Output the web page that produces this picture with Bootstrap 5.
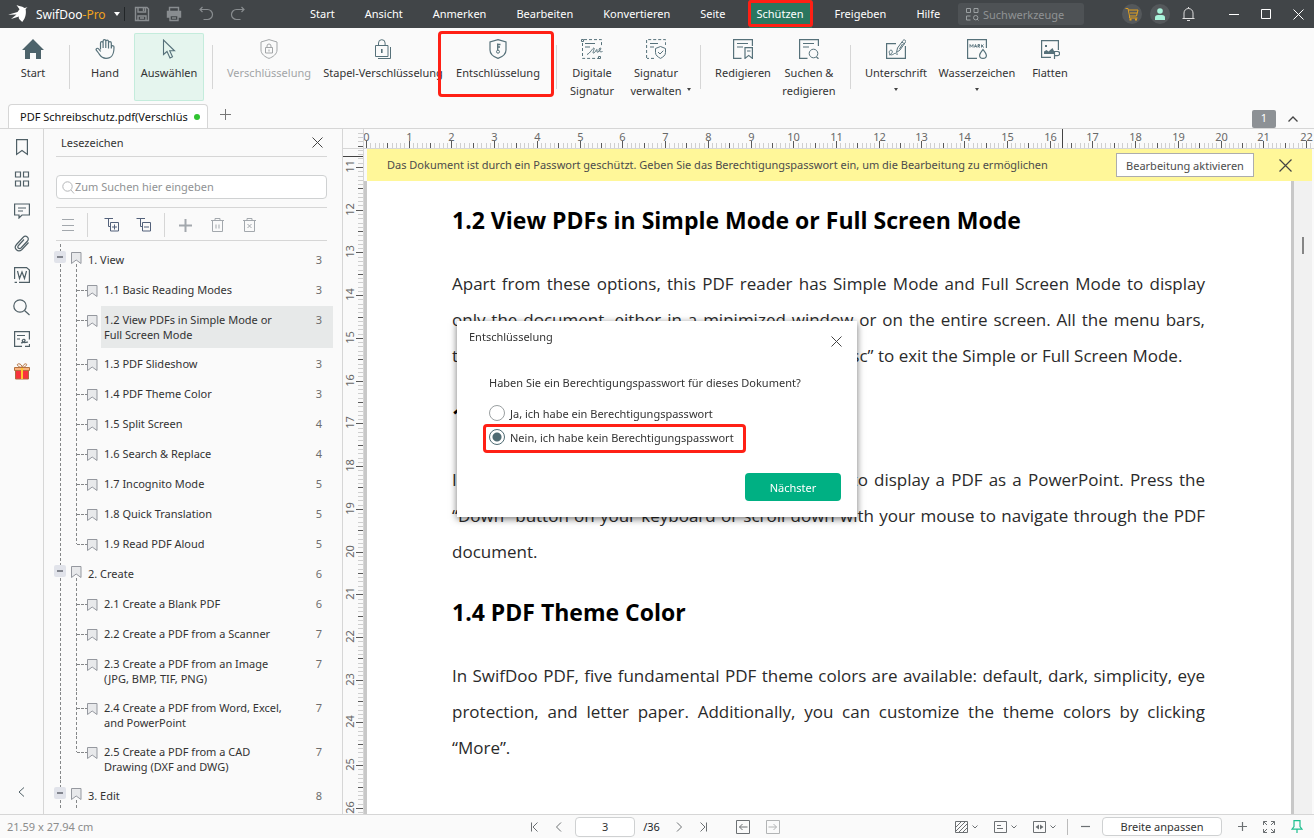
<!DOCTYPE html>
<html lang="de">
<head>
<meta charset="utf-8">
<meta name="viewport" content="width=device-width, initial-scale=1">
<title>SwifDoo-Pro</title>
<link href="https://cdn.jsdelivr.net/npm/bootstrap@5.3.0/dist/css/bootstrap.min.css" rel="stylesheet">
<style>
  :root { --ink: #333; --icon: #56717a; --line: #d6d6d6; --accent: #00b083; --mark-red: #ff2015; }
  body { font: 11px/15px "Noto Sans", "Open Sans", sans-serif; color: var(--ink); background: #fafafa; }
  button, input { font: inherit; color: inherit; }
  button { background: none; border: 0; padding: 0; }
  a { color: inherit; text-decoration: none; }
  svg { display: block; flex: none; fill: none; stroke: currentColor; }
  svg text { fill: #686868; stroke: none; font-size: 11px; text-anchor: middle; }

  .titlebar { height: 28px; background: #414548; color: #fff; }
  .brand { font-size: 12px; width: 295px; padding-left: 8px; }
  .brand em { font-style: normal; color: #f0a21c; }
  .menu-link { padding: 0 15px; line-height: 28px; }
  .menu-active { position: relative; background: #2a765f; margin: 0 8px; padding: 0 8px; line-height: 28px; }
  .menu-active::after { content: ""; position: absolute; inset: 0 -1px 1px -1px; border: 3px solid var(--mark-red); border-radius: 3px; }
  .tool-search { width: 126px; height: 22px; background: #4e5255; border-radius: 3px; color: #9ba0a2; padding-left: 8px; margin-right: 30px; }
  .tool-search input { width: 96px; background: none; border: 0; outline: 0; padding: 0; }
  .tool-search input::placeholder, .find input::placeholder { color: #909294; opacity: 1; }
  .round-btn { width: 20px; height: 20px; border-radius: 50%; background: #54585b; margin-left: 8px; }
  .bell { background: none; margin-right: 20px; }
  .win-btn { width: 32px; height: 28px; }

  .ribbon { height: 76px; padding-left: 8px; padding-top: 5px; display: grid; justify-items: center;
    grid-template-columns: 50px 22px 50px 78px 8px 106px 122px 108px 8px 64px 64px 24px 62px 70px 12px 80px 82px 64px; }
  .ribbon button { height: 68px; padding-top: 6px; line-height: 18px; display: flex; flex-direction: column; align-items: center; color: var(--icon); white-space: nowrap; position: relative; }
  .ribbon button span { color: var(--ink); margin-top: 5px; }
  .ribbon .vr-line { width: 1px; height: 44px; margin-top: 12px; background: var(--line); }
  .ribbon .picked { width: 70px; background: #e5f5ee; box-shadow: inset 0 0 0 1px #c4ecdc; border-radius: 2px; }
  .ribbon .off, .ribbon .off span { color: #a2a5a7; }
  .ribbon .flagged { width: 116px; height: 66px; margin: -2px 0 0 -4px; padding-top: 5px; padding-left: 4px; border: 3px solid var(--mark-red); border-radius: 4px; }
  .tri { width: 0; height: 0; border: 2px solid transparent; border-top: 3px solid #444; border-bottom: 0; }
  .ribbon .tri { margin-top: 6px; }
  .ribbon .tri-side { position: absolute; right: -10px; bottom: 10px; }

  .tabstrip { height: 25px; border-bottom: 1px solid var(--line); padding-left: 8px; }
  .doc-tab { width: 200px; height: 24px; background: #fff; border: 1px solid var(--line); border-bottom: 0; border-radius: 4px 4px 0 0; padding-left: 11px; color: #111; }
  .doc-tab b { width: 6px; height: 6px; border-radius: 50%; background: #30c431; margin-left: 6px; }
  .count { width: 24px; height: 18px; background: #8d9195; color: #fff; border-radius: 2px; }

  .rail { width: 44px; border-right: 1px solid var(--line); color: #4f5f66; padding: 7px 0 11px; }
  .rail button { height: 22px; margin-bottom: 10px; }
  .side { width: 299px; border-right: 1px solid var(--line); }
  .inset { margin: 0 15px 0 12px; }
  .side-title { height: 28px; border-bottom: 1px solid var(--line); padding-left: 5px; }
  .find { height: 24px; margin-top: 18px; background: #fff; border: 1px solid #cfd1d2; border-radius: 4px; padding-left: 5px; color: #b4b6b8; }
  .find input { border: 0; outline: 0; background: none; padding: 0 0 1px; flex: 1; }
  .side-tools { height: 34px; margin-top: 8px; border-top: 1px solid var(--line); border-bottom: 1px solid var(--line); padding-top: 2px; color: #a3a8ad; }
  .side-tools button { width: 32px; display: flex; justify-content: center; }
  .side-tools .vr-line { width: 1px; height: 24px; background: var(--line); }

  .tree, .tree ul { list-style: none; margin: 0; padding: 0; }
  .tree { padding-top: 3px; --v: repeating-linear-gradient(#858789 0 3px, transparent 3px 5px); --h: repeating-linear-gradient(90deg, #858789 0 3px, transparent 3px 4px); }
  .tree svg { color: #95989f; fill: #e8e9eb; }
  .node { min-height: 30px; display: flex; background: var(--v) 16px 0 / 1px 100% no-repeat, var(--v) 32px 20px / 1px 100% no-repeat; }
  .node .fold { width: 12px; height: 12px; margin: 7px 5px 0 10px; background: #e1e3ea; border-radius: 2px; display: grid; place-items: center; }
  .node .fold::after { content: ""; width: 6px; height: 2px; background: #83868f; }
  .node svg { margin-top: 8px; }
  .node .caption { padding: 8px 0 7px 6px; flex: 1; }
  .page-no { width: 12px; color: #6d6d6d; text-align: center; }
  .node .page-no { margin: 8px 17px 0 0; }
  .leaf { min-height: 30px; display: flex; padding-left: 43px; padding-right: 9px;
    background: var(--v) 16px 0 / 1px 100% no-repeat, var(--v) 32px 0 / 1px 100% no-repeat, var(--h) 33px 16px / 10px 1px no-repeat; }
  .leaf:last-child { background-size: 1px 100%, 1px 16px, 10px 1px; }
  .leaf svg { margin-top: 11px; }
  .leaf .caption { flex: 1; margin: 2px 0 0 3px; padding: 6px 8px 6px 3px; display: flex; justify-content: space-between; }
  .leaf .caption a { width: 190px; }
  .leaf.current .caption { background: #e7e9e9; }

  .v-ruler { width: 20px; }
  .paper-col { border-left: 1px solid var(--line); }
  .h-ruler { height: 20px; border-bottom: 1px solid var(--line); }
  .notice { height: 32px; margin: 0 2px 0 3px; background: #fff799; color: #4c4c4c; padding-left: 20px; }
  .notice span { padding-bottom: 2px; }
  .notice .act { width: 138px; height: 24px; background: #fff; border: 1px solid #adadad; margin-right: 25px; }
  .notice .shut { margin-right: 20px; }
  .sheet { background: #fff; border: solid #c8c8c8; border-width: 0 3px; padding: 21px 86px 0 85px; font: 17px/36px "Open Sans", "Noto Sans", sans-serif; color: #2a2a2a; }
  .sheet h2 { font-size: 23px; line-height: 36px; font-weight: 700; color: #000; margin: 0 0 28px; }
  .sheet p { margin: 0 0 24px; }
  .sheet p span { display: block; white-space: nowrap; text-align-last: justify; }
  .sheet p span:last-child { text-align-last: start; }
  .scroll-lane { width: 20px; background: #f1f1f1; border-right: 2px solid #fafafa; padding: 56px 0 0 8px; }
  .scroll-lane i { display: block; width: 2px; height: 17px; background: #858585; }

  .dialog-box { width: 400px; height: 196px; background: #fff; box-shadow: 0 2px 7px rgba(0,0,0,.55); }
  .dialog-head { padding: 8px 12px 0; height: 54px; }
  .dialog-head button { margin: 7px 3px 0 0; }
  .dialog-main { padding: 0 16px 0 32px; }
  .dialog-main .ask { margin-bottom: 11px; }
  .dialog-main label { height: 24px; display: flex; align-items: center; gap: 5px; }
  .dialog-main input { appearance: none; width: 16px; height: 16px; margin: 0; border: 1px solid #9a9fa1; border-radius: 50%; background: #fff; }
  .dialog-main input:checked { border-color: #4f6b73; background: radial-gradient(circle, #4f6b73 0 4px, #fff 5px); }
  .flag-row { position: relative; }
  .flag-row::after { content: ""; position: absolute; left: -6px; top: -1px; width: 263px; height: 29px; border: 3px solid var(--mark-red); border-radius: 4px; }
  .next { width: 96px; height: 28px; background: var(--accent); color: #fff; border-radius: 4px; }

  .status { height: 24px; border-top: 1px solid var(--line); display: grid; grid-template-columns: 1fr auto 1fr; align-items: center; color: #6c7073; }
  .status input { background: #fff; border: 1px solid #cfd1d2; border-radius: 4px; text-align: center; padding: 0; color: var(--ink); }
  .size-note { color: #8c8c8c; padding-left: 7px; }
  .page-box { width: 60px; height: 20px; margin: 0 8px 0 13px; }
  .view-tools { padding-right: 11px; }
  .status .vr-line { width: 1px; height: 16px; background: #bbb; margin: 0 13px 0 11px; }
  .zoom-box { width: 120px; height: 19px; margin: 0 16px 0 12px; }
</style>
</head>
<body class="vh-100 d-flex flex-column overflow-hidden">

<header class="titlebar d-flex align-items-center">
  <div class="brand d-flex align-items-center">
    <svg width="20" height="20" viewBox="0 0 20 20"><path fill="#fff" stroke="none" d="M19.500 3.200 16.500 4C13.500 2 11 2.300 8.500 1l3 4.200L9.500 8 0 10.800l8.500-.300L3 15l8-2.500c-1 1.500.500 3 3.200 5.500C18 13.500 18.300 9 17.600 5z"/></svg>
    <span class="ms-2">SwifDoo<em>-Pro</em></span>
    <svg class="ms-2" width="6" height="4"><path fill="#fff" stroke="none" d="M0 0h6L3 4z"/></svg>
    <svg class="ms-1" width="2" height="14"><path stroke="#222628" d="M.5 0v14"/></svg>
    <svg class="ms-2 me-3" width="16" height="16" viewBox="0 0 16 16" stroke-width="1.400"><path stroke="#898d90" d="M1.500 1.500h11.500l1.500 1.500v11.500h-13zM4 1.500v4.500h7.500v-4.500M4 14V10h8v4M6 12h4M9.500 2v3"/></svg>
    <svg width="16" height="16" viewBox="0 0 16 16"><g stroke="#898d90" stroke-width="1.400"><path d="M3.500 5V1.500h9V5"/><path fill="#898d90" d="M1.500 5.500h13v5.500h-13z"/><path fill="#414548" d="M4 9.500h8v5H4z"/><path d="M6 12h4"/></g></svg>
    <svg class="ms-3" width="16" height="16" viewBox="0 0 16 16" stroke-width="1.200"><path stroke="#898d90" d="M4.500 1 2 3.500 4.500 6M2 3.500h7.500a4.700 4.700 0 0 1 0 10H5.500"/></svg>
    <svg class="ms-3" width="16" height="16" viewBox="0 0 16 16" stroke-width="1.200"><path stroke="#898d90" d="M11.500 1 14 3.500 11.500 6M14 3.500H6.500a4.700 4.700 0 0 0 0 10h4"/></svg>
  </div>
  <nav class="d-flex">
    <a class="menu-link" href="#">Start</a><a class="menu-link" href="#">Ansicht</a><a class="menu-link" href="#">Anmerken</a><a class="menu-link" href="#">Bearbeiten</a><a class="menu-link" href="#">Konvertieren</a><a class="menu-link" href="#">Seite</a><a class="menu-active" href="#">Schützen</a><a class="menu-link" href="#">Freigeben</a><a class="menu-link" href="#">Hilfe</a>
  </nav>
  <div class="ms-auto d-flex align-items-center">
    <label class="tool-search d-flex align-items-center gap-1">
      <svg width="13" height="13" viewBox="0 0 13 13"><path d="M.5.500h4v4h-4zM8 .5h4v4H8zM4.500 8H.5v4h4M12.500 12.500l-1.500-1.500M7.500 9.700a2.200 2.200 0 1 0 4.400 0 2.200 2.200 0 1 0-4.400 0"/></svg>
      <input type="text" placeholder="Suchwerkzeuge" aria-label="Suchwerkzeuge">
    </label>
    <button class="round-btn d-grid align-items-center justify-content-center" aria-label="Warenkorb"><svg width="14" height="14" viewBox="0 0 14 14"><path stroke="#e0a021" d="M.5 1.500H3l1.500 7.500h7l1.500-6H3.500M4.500 9v2h8M5 6h7"/><path fill="#e0a021" stroke="none" d="M4.500 11.500h2v2h-2zM10 11.500h2v2h-2z"/></svg></button>
    <button class="round-btn d-grid align-items-center justify-content-center" aria-label="Konto"><svg width="12" height="12" viewBox="0 0 12 12"><g fill="#a9f3da" stroke="none"><circle cx="6" cy="3" r="2.800"/><path d="M1 12V9.500Q1 7 4 7h4q3 0 3 2.500V12z"/></g></svg></button>
    <button class="round-btn bell d-grid align-items-center justify-content-center" aria-label="Mitteilungen"><svg width="13" height="14" viewBox="0 0 13 14"><path stroke="#ddd" d="M.5 11.500h12M2 11V6a4.500 4.500 0 0 1 9 0v5M5 13.500h3M6.500 0v1.500"/></svg></button>
    <button class="win-btn d-grid align-items-center justify-content-center" aria-label="Minimieren"><svg width="11" height="11"><path d="M0 5.500h10"/></svg></button>
    <button class="win-btn d-grid align-items-center justify-content-center" aria-label="Maximieren"><svg width="11" height="11"><path d="M.5.500h9v9h-9z"/></svg></button>
    <button class="win-btn d-grid align-items-center justify-content-center" aria-label="Schließen"><svg width="11" height="11"><path d="M.5.500l10 10M10.500.500l-10 10"/></svg></button>
  </div>
</header>

<div class="ribbon">
  <button><svg width="22" height="20" viewBox="0 0 22 20"><path fill="#4d636b" stroke="none" d="M11 0 22 11h-3v9h-5v-6H8v6H3v-9H0z"/></svg><span>Start</span></button>
  <i class="vr-line"></i>
  <button><svg width="20" height="20" viewBox="0 0 20 20" stroke-width="1.200"><path d="M5.500 10.500V4a1.300 1.300 0 0 1 2.600 0v5M8.100 9V2a1.300 1.300 0 0 1 2.700 0v7M10.800 9V2.500a1.300 1.300 0 0 1 2.700 0V9.500M13.500 9V4a1.400 1.400 0 0 1 2.800 0V9.500l.2-2a1.300 1.300 0 0 1 2.500.500C19 15 17.500 19.300 11 19.300c-5 0-6-3.300-7.500-5.300L1.300 11.200c-.8-1.600 1.200-2.700 2.400-1.200l2 2.500"/></svg><span>Hand</span></button>
  <button class="picked"><svg width="16" height="20" viewBox="0 0 16 20" stroke-width="1.100"><path d="M2.500 1v14.500l3.500-3 3 6.500 2.500-1.200-2.800-6H13.500z"/></svg><span>Auswählen</span></button>
  <i class="vr-line"></i>
  <button class="off"><svg width="18" height="20" viewBox="0 0 18 20"><path d="M9 .6 17 3v8c0 4-4 7-8 8.400C5 18 1 15 1 11V3zM5.500 8.500h7v5.500h-7zM7 8.500V7a2 2 0 0 1 4 0v1.500M9 10.500v2"/></svg><span>Verschlüsselung</span></button>
  <button><svg width="18" height="20" viewBox="0 0 18 20"><path d="M1.500 6.500h12.500v11H1.500zM4.500 6.500V4a3.300 3.300 0 0 1 6.600 0v2.500M16.500 8v11.500H4"/><path stroke-width="1.600" d="M7.800 10v4"/></svg><span>Stapel-Verschlüsselung</span></button>
  <button class="flagged"><svg width="18" height="20" viewBox="0 0 18 20"><path stroke-width="1.200" d="M9 .6 17 3v8c0 4-4 7-8 8.400C5 18 1 15 1 11V3z"/><path stroke-width="1.300" d="M8.700 11V4.500M9 5.500h2.500M9 8h2"/><circle cx="9" cy="12.700" r="1.500"/></svg><span>Entschlüsselung</span></button>
  <i class="vr-line"></i>
  <button><svg width="22" height="20" viewBox="0 0 22 20"><path stroke-dasharray="3 2" d="M3 .6h17.500V7M1.500 4v15.400H18"/><path d="M.5.500h2v2h-2zM17.500 17.500h2v2h-2zM4 4.500h10M4 8h5M6 15.500c3-1 6-7 7-6.500s-2.500 6 0 5c1.500-1 2.500-4 3-3.500s-1 3.500 1 2.500c3-1.500 3.500-4.500 2-4s-1.500 5 2.500 3.500"/></svg><span>Digitale<br>Signatur</span></button>
  <button><svg width="20" height="20" viewBox="0 0 20 20"><path stroke-dasharray="3 2" d="M.6 19V.6h19V6M8 19.400H1"/><path d="M4 4.500h8M4 8h4M14.500 7.500l5 2v4c0 3-2.500 4.500-5 5.900-2.500-1.400-5-2.900-5-5.900v-4zM12 13l2 2 3.300-3.300"/></svg><span>Signatur<br>verwalten</span><i class="tri tri-side"></i></button>
  <i class="vr-line"></i>
  <button><svg width="20" height="20" viewBox="0 0 20 20"><path stroke-width="1.200" d="M8.500 19.400H.6V.6h18.800V7M12 8.600h7.400v10.800l-3.700-3-3.700 3z"/><path d="M4 4.500h11M4 8h6M14 12h3.500"/></svg><span>Redigieren</span></button>
  <button><svg width="20" height="20" viewBox="0 0 20 20"><path stroke-width="1.200" d="M8.500 19.400H.6V.6h18.800V7M17.500 18l2 1.800"/><circle cx="14.500" cy="14.500" r="4.300"/><path d="M4 4.500h11M4 8h6"/></svg><span>Suchen &amp;<br>redigieren</span></button>
  <i class="vr-line"></i>
  <button><svg width="20" height="20" viewBox="0 0 20 20"><path stroke-width="1.200" d="M10 4.600H.6v14.800h18.800V7"/><path d="M10.500 13.500l1-4.500L17 1.500c1-1.500 3.500 0 2.500 1.500l-5.500 8zM16 3l2.500 2M13.500 10l3-5M3 16c2.500-1 4-2.500 3-4.500-1.500-1-3.500.5-2.500 3s3.500 1 5 0 1.500 1.500 3.500.5"/></svg><span>Unterschrift</span><i class="tri"></i></button>
  <button><svg width="20" height="20" viewBox="0 0 20 20"><path stroke-width="1.200" d="M10 19.400H.6V.6h18.800V9M16 10.500c2 2.500 3.400 4 3.400 5.700a3.400 3.200 0 0 1-6.800 0c0-1.700 1.400-3.200 3.400-5.700z"/><path stroke-width=".9" d="M3 8.500v-3l1.500 2L6 5.500v3M7.300 8.500l1.200-3 1.200 3M8 7.500h1.500M11 8.500v-3h1.500V7H11l2 1.500M14.500 5.500v3M16.500 5.500l-1.500 1.500 2 1.500"/></svg><span>Wasserzeichen</span><i class="tri"></i></button>
  <button><svg width="20" height="20" viewBox="0 0 20 20"><path stroke-width="1.200" d="M11 18.400H1.600V1.600h16.800V11"/><path fill="currentColor" stroke="none" d="M5 6h2v2H5zM4 15v-2.500l2.500-1.500 2 1.500L12.500 9l1.500 3v3z"/><path stroke-width="1.200" d="M14.500 20v-7.500h3a2 2 0 0 1 0 4.200h-3"/></svg><span>Flatten</span></button>
</div>

<div class="tabstrip d-flex align-items-end">
  <div class="doc-tab d-flex align-items-center"><span>PDF Schreibschutz.pdf(Verschlüs</span><b></b></div>
  <button class="ms-2" aria-label="Neuer Tab"><svg class="m-1 mb-2" width="12" height="11"><path stroke="#777" d="M0 5.500h11M5.500 0v11"/></svg></button>
  <div class="ms-auto d-flex align-items-center">
    <span class="count text-center">1</span>
    <button class="px-2 me-1" aria-label="Menüband einklappen"><svg class="mx-1" width="10" height="6"><path stroke="#444" stroke-width="1.300" d="M.5 5.500 5 1l4.500 4.500"/></svg></button>
  </div>
</div>

<main class="flex-fill d-flex overflow-hidden">
  <aside class="rail d-flex flex-column align-items-center flex-shrink-0">
    <button aria-label="Lesezeichen"><svg width="16" height="20" viewBox="0 0 16 20" stroke-width="1.200"><path d="M2.600 2.600h10.800v14.800L8 13.500l-5.400 3.900z"/></svg></button>
    <button aria-label="Miniaturen"><svg width="16" height="16" viewBox="0 0 16 16" stroke-width="1.200"><path d="M1.500 1h5v5h-5zM9.500 1h5v5h-5zM1.500 10h5v5h-5zM9.500 10h5v5h-5z"/></svg></button>
    <button aria-label="Kommentare"><svg width="16" height="16" viewBox="0 0 16 16" stroke-width="1.200"><path d="M.6 1h14.800v11H8l-3 3v-3H.6zM4 5h8M4 8h5"/></svg></button>
    <button aria-label="Anlagen"><svg width="16" height="17" viewBox="0 0 16 17" stroke-width="1.200"><path d="M14.500 7.500 8 14.500c-4 3.500-9-1-5.500-5l6.500-7c3-3 7 .500 4.500 3.500l-6.500 7c-2 1.500-4.500-.500-2.500-2.500l5.500-6"/></svg></button>
    <button aria-label="Word"><svg width="16" height="16" viewBox="0 0 16 16" stroke-width="1.200"><path d="M.6 12V.6h12l2.800 2.500v12.300H5M.6 15.400H3M3.500 4l2 7.500L8 5l2.500 6.500 2-7.500"/></svg></button>
    <button aria-label="Suchen"><svg width="17" height="17" viewBox="0 0 17 17" stroke-width="1.200"><circle cx="7" cy="7" r="6.200"/><path d="M11.500 11.500l5 4.500"/></svg></button>
    <button aria-label="Signaturen"><svg width="16" height="16" viewBox="0 0 16 16" stroke-width="1.200"><path d="M8 15.400H.6V.6h14.800v8M3 4.500h8M3 8h3M7 12c2-.5 4.500-1.500 4-3s-3.500-.500-2.500 1.500 3.500 1 5.500.500M11 15.400h4.500v-2.500"/></svg></button>
    <button aria-label="Geschenk"><svg width="16" height="17" viewBox="0 0 16 17"><path fill="#f8323c" stroke="#b06a3c" d="M1.500 6.500h13v9.500h-13z"/><path fill="#f8b27c" stroke="#b4713f" d="M.5 4.500h15v3H.5z"/><path stroke="#b4713f" d="M8 4.500C4 4.500 2 1 4.500.8S8 3 8 4.500 9 1 11.500.8 12 4.500 8 4.500"/><path stroke="#ffc72e" stroke-width="2" d="M8 5v11"/></svg></button>
    <button class="mt-auto mb-0" aria-label="Leiste einklappen"><svg width="8" height="10"><path d="M6 .5 1 5l5 4.500"/></svg></button>
  </aside>

  <section class="side flex-shrink-0 overflow-hidden">
    <div class="inset side-title d-flex align-items-center justify-content-between"><span>Lesezeichen</span>
      <button aria-label="Schließen"><svg class="mx-1" width="11" height="11"><path stroke="#444" d="M.5.500l10 10M10.500.500l-10 10"/></svg></button></div>
    <label class="inset find d-flex align-items-center"><svg width="13" height="13"><circle cx="5.500" cy="5.500" r="4.700"/><path d="M9 9l3 3.500"/></svg><input type="text" placeholder="Zum Suchen hier eingeben" aria-label="Zum Suchen hier eingeben"></label>
    <div class="inset side-tools d-flex align-items-center">
      <button class="w-auto me-2 px-1" aria-label="Liste"><svg width="15" height="12"><path d="M2 .5h12M2 6.500h12M2 11.500h12"/></svg></button>
      <i class="vr-line me-2"></i>
      <button aria-label="Alle ausklappen"><svg width="16" height="16" viewBox="0 0 16 16"><path stroke="#53617a" d="M.5 1.500h8.500M4.500 1.500v8h2M6.500 5.500h8v8.500h-8zM10.500 7.500v5M8 10h5"/></svg></button>
      <button aria-label="Alle einklappen"><svg width="16" height="16" viewBox="0 0 16 16"><path stroke="#53617a" d="M.5 1.500h8.500M4.500 1.500v8h2M6.500 5.500h8v8.500h-8zM8 10h5"/></svg></button>
      <i class="vr-line ms-1 me-1"></i>
      <button aria-label="Hinzufügen"><svg width="13" height="13"><path stroke-width="2" d="M0 6.500h13M6.500 0v13"/></svg></button>
      <button aria-label="Löschen"><svg width="13" height="15"><path d="M0 2.500h13M4 2V.5h5V2M1.500 3v10.500h10V3M5 6.500v4M8 6.500v4"/></svg></button>
      <button aria-label="Alle löschen"><svg width="13" height="15"><path d="M0 2.500h13M4 2V.5h5V2M1.500 3v10.500h10V3M4.500 6l4 4M8.500 6l-4 4"/></svg></button>
    </div>
    <ul class="tree" id="tree"></ul>
  </section>

  <svg class="v-ruler" id="vRuler" height="100%"></svg>

  <section class="paper-col flex-fill d-flex flex-column overflow-hidden">
    <svg class="h-ruler" id="hRuler" width="100%"></svg>
    <div class="notice d-flex align-items-center flex-shrink-0">
      <span>Das Dokument ist durch ein Passwort geschützt. Geben Sie das Berechtigungspasswort ein, um die Bearbeitung zu ermöglichen</span>
      <button class="act ms-auto">Bearbeitung aktivieren</button>
      <button class="shut" aria-label="Schließen"><svg width="13" height="13"><path stroke="#444" stroke-width="1.200" d="M.5.500l12 12M12.500.500l-12 12"/></svg></button>
    </div>
    <div class="flex-fill d-flex overflow-hidden">
      <article class="sheet flex-fill">
        <h2>1.2 View PDFs in Simple Mode or Full Screen Mode</h2>
        <p><span>Apart from these options, this PDF reader has Simple Mode and Full Screen Mode to display</span><span>only the document, either in a minimized window or on the entire screen. All the menu bars,</span><span>toolbars, and other panels will be hidden. Select “Esc” to exit the Simple or Full Screen Mode.</span></p>
        <h2>1.3 PDF Slideshow</h2>
        <p><span>In SwifDoo PDF, you can use its slideshow mode to display a PDF as a PowerPoint. Press the</span><span>“Down” button on your keyboard or scroll down with your mouse to navigate through the PDF</span><span>document.</span></p>
        <h2>1.4 PDF Theme Color</h2>
        <p><span>In SwifDoo PDF, five fundamental PDF theme colors are available: default, dark, simplicity, eye</span><span>protection, and letter paper. Additionally, you can customize the theme colors by clicking</span><span>“More”.</span></p>
      </article>
      <div class="scroll-lane flex-shrink-0"><i></i></div>
    </div>
  </section>
</main>

<footer class="status flex-shrink-0">
  <span class="size-note">21.59 x 27.94 cm</span>
  <div class="d-flex align-items-center pe-1">
    <button aria-label="Erste Seite"><svg width="9" height="10"><path d="M1.500.500v9M7.500.500 3 5l4.500 4.500"/></svg></button>
    <button class="ms-3" aria-label="Vorherige Seite"><svg width="7" height="10"><path d="M6 .5 1.500 5 6 9.500"/></svg></button>
    <input class="page-box" type="text" value="3" aria-label="Seite">
    <span class="text-dark">/36</span>
    <button class="ms-3" aria-label="Nächste Seite"><svg width="7" height="10"><path d="M1 .5 5.500 5 1 9.500"/></svg></button>
    <button class="ms-3" aria-label="Letzte Seite"><svg width="9" height="10"><path d="M7.500.500v9M1.500.500 6 5 1.500 9.500"/></svg></button>
    <button class="ms-4 ps-1" aria-label="Zurück"><svg width="14" height="14"><path d="M.5.500h13v13H.5zM3.500 7h8M6.500 4l-3 3 3 3"/></svg></button>
    <button class="ms-3 opacity-50" aria-label="Vor"><svg width="14" height="14"><path d="M.5.500h13v13H.5zM2.500 7h8M7.500 4l3 3-3 3"/></svg></button>
  </div>
  <div class="view-tools d-flex align-items-center justify-content-end">
    <button class="d-flex align-items-center gap-1" aria-label="Hintergrund"><svg width="13" height="12"><path d="M.5.500h12v11H.5zM1 6l5-5M1 10l9-9M4 11l8-8M8 11l4-4"/></svg><svg width="6" height="4"><path d="M.5.500 3 3 5.500.500"/></svg></button>
    <button class="d-flex align-items-center gap-1 ms-3" aria-label="Layout"><svg width="13" height="12"><path d="M.5.500h12v11H.5zM3 4.500h4M3 7.500h6"/></svg><svg width="6" height="4"><path d="M.5.500 3 3 5.500.500"/></svg></button>
    <button class="d-flex align-items-center gap-1 ms-3" aria-label="Anpassen"><svg width="13" height="12"><path d="M.5.500h12v11H.5z"/><path fill="currentColor" stroke="none" d="M2.500 6 6 3.500v5zM10.500 6 7 3.500v5z"/></svg><svg width="6" height="4"><path d="M.5.500 3 3 5.500.500"/></svg></button>
    <i class="vr-line"></i>
    <button aria-label="Verkleinern"><svg width="9" height="9"><path stroke-width="1.200" d="M0 4.500h9"/></svg></button>
    <input class="zoom-box" type="text" value="Breite anpassen" aria-label="Zoom">
    <button aria-label="Vergrößern"><svg width="9" height="9"><path stroke-width="1.200" d="M0 4.500h9M4.500 0v9"/></svg></button>
    <button class="ms-3" aria-label="Vollbild"><svg width="12" height="12"><path d="M.5 4V.5H4M.5.500l3.500 3.500M8 .5h3.500V4M11.500.500 8 4M.5 8v3.500H4M.5 11.500 4 8M8 11.500h3.500V8M11.500 11.500 8 8"/></svg></button>
    <button class="ms-3" aria-label="Anheften"><svg width="12" height="13"><path stroke="#1fbf8f" stroke-width="1.200" d="M3 .6h6v6l2 2.500H1L3 6.600zM6 9v4"/></svg></button>
  </div>
</footer>

<div class="position-fixed top-0 start-0 w-100 h-100 d-flex align-items-center justify-content-center">
  <form class="dialog-box" role="dialog" aria-label="Entschlüsselung">
    <div class="dialog-head d-flex justify-content-between align-items-start"><span>Entschlüsselung</span>
      <button type="button" aria-label="Schließen"><svg width="11" height="11"><path stroke="#444" d="M.5.500l10 10M10.500.500l-10 10"/></svg></button></div>
    <div class="dialog-main">
      <div class="ask">Haben Sie ein Berechtigungspasswort für dieses Dokument?</div>
      <label><input type="radio" name="pw">Ja, ich habe ein Berechtigungspasswort</label>
      <label class="flag-row"><input type="radio" name="pw" checked>Nein, ich habe kein Berechtigungspasswort</label>
      <div class="text-end pt-4"><button type="button" class="next">Nächster</button></div>
    </div>
  </form>
</div>

<script src="https://cdn.jsdelivr.net/npm/bootstrap@5.3.0/dist/js/bootstrap.bundle.min.js"></script>
<script>
  // Bookmark tree: [title, page, children]; "*" marks the open entry
  const outline = [
    ['1. View', 3, [['1.1 Basic Reading Modes', 3], ['*1.2 View PDFs in Simple Mode or<br>Full Screen Mode', 3], ['1.3 PDF Slideshow', 3], ['1.4 PDF Theme Color', 3], ['1.5 Split Screen', 4], ['1.6 Search &amp; Replace', 4], ['1.7 Incognito Mode', 5], ['1.8 Quick Translation', 5], ['1.9 Read PDF Aloud', 5]]],
    ['2. Create', 6, [['2.1 Create a Blank PDF', 6], ['2.2 Create a PDF from a Scanner', 7], ['2.3 Create a PDF from an Image<br>(JPG, BMP, TIF, PNG)', 7], ['2.4 Create a PDF from Word, Excel,<br>and PowerPoint', 7], ['2.5 Create a PDF from a CAD<br>Drawing (DXF and DWG)', 7]]],
    ['3. Edit', 8, []]
  ];
  const mark = '<svg width="11" height="12"><path d="M.5.500h9.500v11L5.200 8 .5 11.500z"/></svg>';
  document.getElementById('tree').innerHTML = outline.map(([title, page, kids]) =>
    `<li><div class="node"><button class="fold" aria-label="Einklappen"></button>${mark}<a class="caption" href="#">${title}</a><span class="page-no">${page}</span></div><ul>` +
    kids.map(([t, p]) => `<li class="leaf${t[0] === '*' ? ' current' : ''}">${mark}<div class="caption"><a href="#">${t.replace('*', '')}</a><span class="page-no">${p}</span></div></li>`).join('') +
    '</ul></li>').join('');

  // Rulers: one centimetre in page pixels, with half and tenth ticks, drawn as far as the window reaches
  const cm = 42.73;
  const tone = n => n % 5 ? '#cfcfcf' : '#5a5a5a';
  const hRuler = document.getElementById('hRuler'), vRuler = document.getElementById('vRuler');
  function drawRulers() {
    const width = hRuler.getBoundingClientRect().width, height = vRuler.getBoundingClientRect().height;
    let h = '', v = '';
    for (let n = 0, x; (x = Math.round(2 + n * cm / 10) + .5) < width; n++) {
      const len = n % 10 ? 5 : 7;
      h += `<path stroke="${tone(n)}" d="M${x} ${19 - len}V19"/>`;
      if (n % 10 === 0) h += `<text x="${x}" y="12">${n / 10}</text>`;
    }
    for (let n = 102, y; (y = Math.round(38 + (n - 110) * cm / 10) + .5) < height; n++) {
      const len = n % 10 ? 5 : 7;
      v += `<path stroke="${tone(n)}" d="M${20 - len} ${y}H20"/>`;
      if (n % 10 === 0) v += `<text transform="translate(11 ${y - 1}) rotate(-90)">${n / 10}</text>`;
    }
    hRuler.innerHTML = h + '<path stroke="#444" d="M698.500 0V19"/>';
    vRuler.innerHTML = v + '<path stroke="#444" d="M0 27.500H20"/><path stroke="#d6d6d6" d="M0 19.500H20"/>';
  }
  drawRulers();
  addEventListener('resize', drawRulers);
</script>
</body>
</html>
